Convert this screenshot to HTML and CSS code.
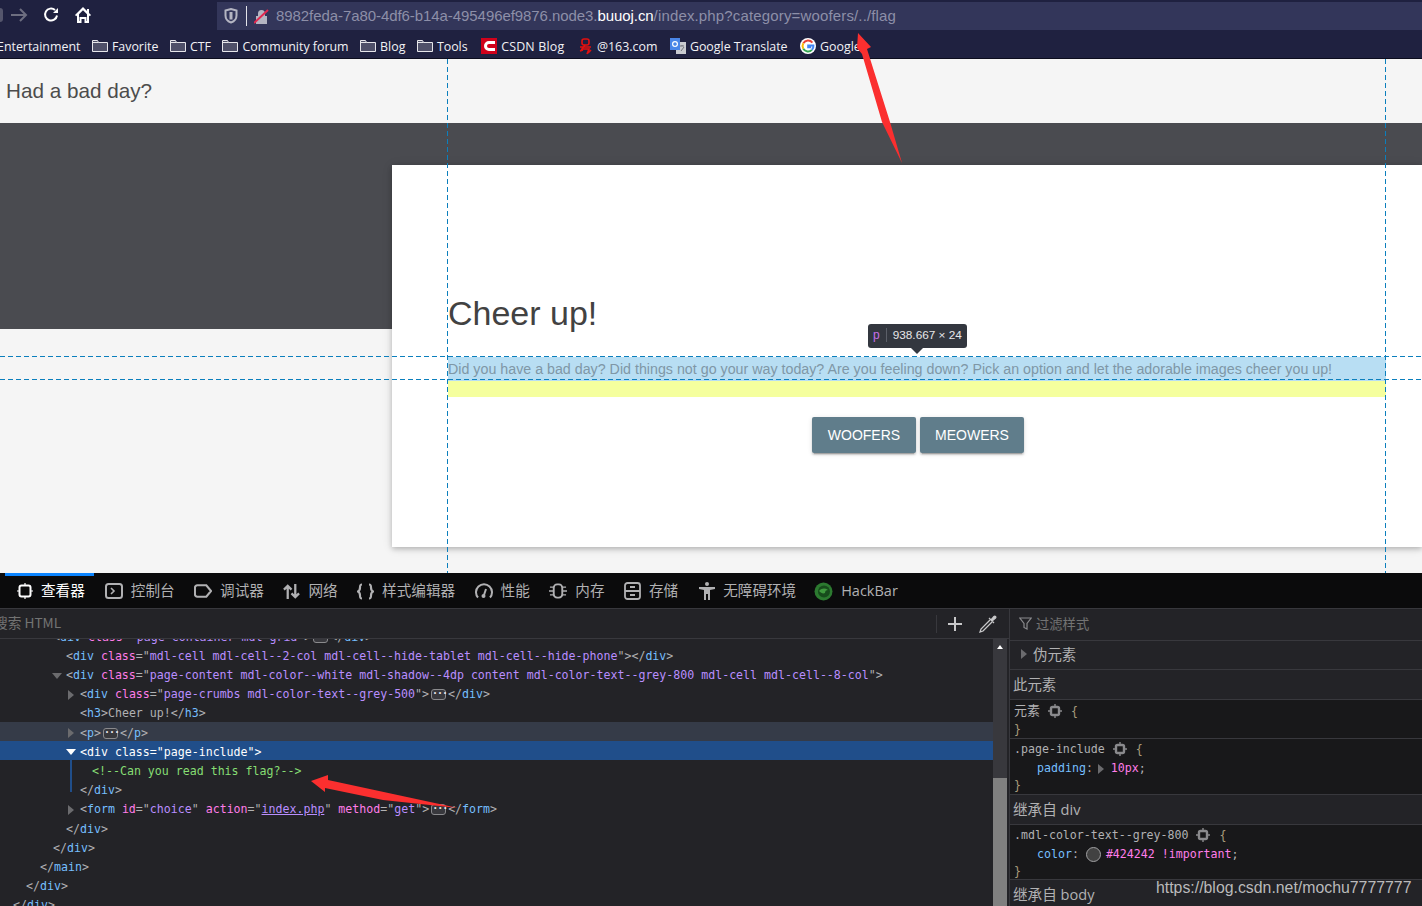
FILE: index.html
```html
<!DOCTYPE html>
<html lang="en">
<head>
    <meta charset="UTF-8">
    <title>Had a bad day?</title>
    <link rel="stylesheet" href="styles.css">
</head>
<body>
    <div class="toolbar">
        <div class="nav-buttons">
            <span class="back-stub"></span>
            <svg class="nav-icon" width="18" height="18" viewBox="0 0 18 18" fill="none" stroke="#6d6e80" stroke-width="2"><path d="M1 9h15M10 3l6 6-6 6"/></svg>
            <svg class="nav-icon" width="18" height="18" viewBox="0 0 18 18" fill="none" stroke="#fff" stroke-width="2"><path d="M15 9.500a6 6 0 1 1-2-5.500"/><path d="M16 2v5h-5z" fill="#fff" stroke="none"/></svg>
            <svg class="nav-icon" width="18" height="18" viewBox="0 0 18 18" fill="#fff"><path d="M9 1 1 9l1.200 1.200L3 9.500V17h4.500v-4h3v4H15V9.500l.8.700L17 9l-2-2V3h-2v2zM5 8.300l4-4 4 4V15h-.5v-4h-7v4H5z"/></svg>
        </div>
        <div class="urlbar">
            <svg width="14" height="16" viewBox="0 0 14 16" fill="none" stroke="#b4b5c2" stroke-width="2"><path d="M1.500 2.500 7 1l5.500 1.500v5c0 3.500-2.500 6-5.500 7-3-1-5.500-3.500-5.500-7z"/><path d="M7 4v7.500" stroke-width="3"/></svg>
            <span class="url-sep"></span>
            <svg width="15" height="17" viewBox="0 0 15 17"><path d="M4 8V5.500a3.500 3.500 0 0 1 7 0V8h2v8H2V8z" fill="#b4b5c2"/><path d="M0 15 14 2" stroke="#e22850" stroke-width="2"/></svg>
            <span class="url-text">8982feda-7a80-4df6-b14a-495496ef9876.node3.<b>buuoj.cn</b><span class="url-path">/index.php?category=woofers/../flag</span></span>
        </div>
    </div>

    <div class="bookmarks">
        <span class="bookmark first">Entertainment</span>
        <span class="bookmark"><svg class="folder" width="16" height="14" viewBox="0 0 16 14"><path d="M.5 12.500V1.500h5l1 2h9v9z" fill="#4f5069" stroke="#e6e6ea"/><path d="M.5 3.500h6" stroke="#e6e6ea"/></svg>Favorite</span>
        <span class="bookmark"><svg class="folder" width="16" height="14" viewBox="0 0 16 14"><path d="M.5 12.500V1.500h5l1 2h9v9z" fill="#4f5069" stroke="#e6e6ea"/><path d="M.5 3.500h6" stroke="#e6e6ea"/></svg>CTF</span>
        <span class="bookmark"><svg class="folder" width="16" height="14" viewBox="0 0 16 14"><path d="M.5 12.500V1.500h5l1 2h9v9z" fill="#4f5069" stroke="#e6e6ea"/><path d="M.5 3.500h6" stroke="#e6e6ea"/></svg>Community forum</span>
        <span class="bookmark"><svg class="folder" width="16" height="14" viewBox="0 0 16 14"><path d="M.5 12.500V1.500h5l1 2h9v9z" fill="#4f5069" stroke="#e6e6ea"/><path d="M.5 3.500h6" stroke="#e6e6ea"/></svg>Blog</span>
        <span class="bookmark"><svg class="folder" width="16" height="14" viewBox="0 0 16 14"><path d="M.5 12.500V1.500h5l1 2h9v9z" fill="#4f5069" stroke="#e6e6ea"/><path d="M.5 3.500h6" stroke="#e6e6ea"/></svg>Tools</span>
        <span class="bookmark csdn"><svg class="folder" width="16" height="16" viewBox="0 0 16 16"><rect width="16" height="16" fill="#d0021b"/><path d="M14 4.500H8a3.500 3.500 0 0 0 0 7h6" fill="none" stroke="#fff" stroke-width="3"/></svg>CSDN Blog</span>
        <span class="bookmark mail"><svg class="folder" width="15" height="17" viewBox="0 0 15 17" fill="none" stroke="#e3100f" stroke-width="1.600"><rect x="4" y="1" width="7" height="6" rx="2"/><path d="M2 9h11M7 7l-3 4h7l-2 5M2 13l3-1M13 12l-3 3"/></svg>@163.com</span>
        <span class="bookmark translate"><svg class="folder" width="16" height="16" viewBox="0 0 16 16"><rect x="6" y="4" width="10" height="12" fill="#c9cbd0"/><path d="M0 0h10v12H0z" fill="#4a86e8"/><circle cx="5" cy="6" r="2.400" fill="none" stroke="#fff" stroke-width="1.200"/><path d="M10 8h4M12 7v1M11 13l3-4" stroke="#70737a" fill="none"/></svg>Google Translate</span>
        <span class="bookmark google"><svg class="folder" width="16" height="16" viewBox="0 0 16 16"><circle cx="8" cy="8" r="8" fill="#fff"/><path d="M12.400 4.600A5.500 5.500 0 0 0 3.300 5.300" fill="none" stroke="#ea4335" stroke-width="2"/><path d="M3.300 5.300a5.500 5.500 0 0 0 0 5.400" fill="none" stroke="#fbbc05" stroke-width="2"/><path d="M3.300 10.700a5.500 5.500 0 0 0 8.600 1.200" fill="none" stroke="#34a853" stroke-width="2"/><path d="M11.900 11.900A5.500 5.500 0 0 0 13.400 7.500H8.200v1.800h3" fill="none" stroke="#4285f4" stroke-width="2"/></svg>Google</span>
    </div>

    <div class="page">
        <h2 class="site-title">Had a bad day?</h2>
        <div class="hero"></div>
        <div class="card">
            <h3>Cheer up!</h3>
            <p class="intro">Did you have a bad day? Did things not go your way today? Are you feeling down? Pick an option and let the adorable images cheer you up!</p>
            <div class="include-pad"></div>
            <div class="choices">
                <button>WOOFERS</button>
                <button>MEOWERS</button>
            </div>
        </div>

        <span class="guide guide-v guide-left"></span>
        <span class="guide guide-v guide-right"></span>
        <span class="guide guide-h guide-top"></span>
        <span class="guide guide-h guide-bottom"></span>
        <div class="infobar"><i>p</i><span>938.667 × 24</span></div>
    </div>

    <div class="devtools">
        <div class="tabs">
            <div class="tab active">
                <svg width="16" height="16" viewBox="0 0 16 16" fill="none" stroke="#fff" stroke-width="2"><rect x="2.500" y="2.500" width="11" height="11" rx="2"/><path d="M8 0v2M8 14v2M0 8h2M14 8h2" stroke-width="1.200"/></svg>
                查看器
            </div>
            <div class="tab">
                <svg width="18" height="16" viewBox="0 0 18 16" fill="none" stroke="#b1b1b3" stroke-width="2"><rect x="1" y="1" width="16" height="14" rx="2.500"/><path d="m6 5 3 3-3 3" stroke-width="1.600"/></svg>
                控制台
            </div>
            <div class="tab">
                <svg width="18" height="14" viewBox="0 0 19 14" fill="none" stroke="#b1b1b3" stroke-width="2.200"><path d="M3.500 1H13l5 6-5 6H3.500A2.500 2.500 0 0 1 1 10.500v-7A2.500 2.500 0 0 1 3.500 1z"/></svg>
                调试器
            </div>
            <div class="tab">
                <svg width="17" height="17" viewBox="0 0 18 16" fill="none" stroke="#b1b1b3" stroke-width="2.400"><path d="M5 16V2M1 6l4-4 4 4M13 0v14M9 10l4 4 4-4"/></svg>
                网络
            </div>
            <div class="tab">
                <svg width="17" height="17" viewBox="0 0 17 16" fill="none" stroke="#b1b1b3" stroke-width="2.200"><path d="M5 1C3 1 3 2 3 4s0 3-2 4c2 1 2 2 2 4s0 3 2 3M12 1c2 0 2 1 2 3s0 3 2 4c-2 1-2 2-2 4s0 3-2 3"/></svg>
                样式编辑器
            </div>
            <div class="tab">
                <svg width="18" height="16" viewBox="0 0 18 16" fill="none" stroke="#b1b1b3" stroke-width="2"><path d="M3 14.500a8 8 0 1 1 12 0"/><circle cx="8.500" cy="13" r="2" fill="#b1b1b3" stroke="none"/><path d="m9 12 2-6"/></svg>
                性能
            </div>
            <div class="tab">
                <svg width="18" height="16" viewBox="0 0 19 16" fill="none" stroke="#b1b1b3" stroke-width="2"><rect x="5" y="1" width="9" height="14" rx="3.500"/><path d="M5 4H1M5 8H0M5 12H1M14 4h4M14 8h5M14 12h4" stroke-width="1.400"/></svg>
                内存
            </div>
            <div class="tab">
                <svg width="17" height="18" viewBox="0 0 17 18" fill="none" stroke="#b1b1b3" stroke-width="1.800"><rect x="1" y="1" width="15" height="16" rx="2.500"/><path d="M1 9h15M6 5h5M6 13h5"/></svg>
                存储
            </div>
            <div class="tab tab-a11y">
                <svg width="16" height="18" viewBox="0 0 16 18" fill="#b1b1b3"><circle cx="8" cy="2" r="2"/><path d="M0 5h16v2l-5 1v10H9v-6H7v6H5V8L0 7z"/></svg>
                无障碍环境
            </div>
            <div class="tab">
                <svg width="19" height="19" viewBox="0 0 19 19"><circle cx="9.500" cy="9.500" r="9" fill="#2c7a30"/><circle cx="10" cy="9.500" r="6" fill="#174c1c"/><path d="M5 9c3-3 6-3 9-1-2 0-3 1-3 3-2 1-4 0-6-2z" fill="#3f9a3e"/></svg>
                <span class="tab-latin">HackBar</span>
            </div>
        </div>

        <div class="panes">
            <div class="inspector">
                <div class="searchbar">
                    <span class="search-label">搜索 HTML</span>
                    <span class="search-tools">
                        <svg width="16" height="16" viewBox="0 0 16 16" stroke="#c8c8ca" stroke-width="2"><path d="M8 1v14M1 8h14"/></svg>
                        <svg width="18" height="18" viewBox="0 0 18 18" fill="none" stroke="#c8c8ca" stroke-width="1.300"><path d="m11 5-9 9-1 3 3-1 9-9"/><path d="m10 3 5 5M12 5l3-3.500c1-1 2.500.5 1.500 1.500L13 6" fill="#c8c8ca"/></svg>
                    </span>
                </div>
                <div class="markup-wrap">
                    <div class="markup">
                        <div class="line lv4 first-line"><b>&lt;</b><em>div</em> <u>class</u><b>="</b><s>page-container mdl-grid</s><b>"&gt;</b><span class="dots">···</span><b>&lt;/</b><em>div</em><b>&gt;</b></div>
                        <div class="line lv5"><b>&lt;</b><em>div</em> <u>class</u><b>="</b><s>mdl-cell mdl-cell--2-col mdl-cell--hide-tablet mdl-cell--hide-phone</s><b>"&gt;&lt;/</b><em>div</em><b>&gt;</b></div>
                        <div class="line lv5"><i class="twisty open"></i><b>&lt;</b><em>div</em> <u>class</u><b>="</b><s>page-content mdl-color--white mdl-shadow--4dp content mdl-color-text--grey-800 mdl-cell mdl-cell--8-col</s><b>"&gt;</b></div>
                        <div class="line lv6"><i class="twisty"></i><b>&lt;</b><em>div</em> <u>class</u><b>="</b><s>page-crumbs mdl-color-text--grey-500</s><b>"&gt;</b><span class="dots">···</span><b>&lt;/</b><em>div</em><b>&gt;</b></div>
                        <div class="line lv6"><b>&lt;</b><em>h3</em><b>&gt;</b>Cheer up!<b>&lt;/</b><em>h3</em><b>&gt;</b></div>
                        <div class="line lv6 hovered"><i class="twisty"></i><b>&lt;</b><em>p</em><b>&gt;</b><span class="dots">···</span><b>&lt;/</b><em>p</em><b>&gt;</b></div>
                        <div class="line lv6 selected"><i class="twisty open"></i><b>&lt;</b>div class<b>="</b>page-include<b>"&gt;</b></div>
                        <div class="line lv7 in-selected"><span class="comment">&lt;!--Can you read this flag?--&gt;</span></div>
                        <div class="line lv6 in-selected-end"><b>&lt;/</b><em>div</em><b>&gt;</b></div>
                        <div class="line lv6"><i class="twisty"></i><b>&lt;</b><em>form</em> <u>id</u><b>="</b><s>choice</s><b>"</b> <u>action</u><b>="</b><s class="link">index.php</s><b>"</b> <u>method</u><b>="</b><s>get</s><b>"&gt;</b><span class="dots">···</span><b>&lt;/</b><em>form</em><b>&gt;</b></div>
                        <div class="line lv5"><b>&lt;/</b><em>div</em><b>&gt;</b></div>
                        <div class="line lv4"><b>&lt;/</b><em>div</em><b>&gt;</b></div>
                        <div class="line lv3"><b>&lt;/</b><em>main</em><b>&gt;</b></div>
                        <div class="line lv2"><b>&lt;/</b><em>div</em><b>&gt;</b></div>
                        <div class="line lv1"><b>&lt;/</b><em>div</em><b>&gt;</b></div>
                    </div>
                    <div class="scrollbar">
                        <span class="scroll-up"></span>
                        <span class="scroll-thumb"></span>
                    </div>
                </div>
            </div>

            <div class="rules">
                <div class="filter">
                    <svg width="13" height="13" viewBox="0 0 13 13" fill="none" stroke="#8a8a8d" stroke-width="1.200"><path d="M.8 1h11.400L8 6.500V12L5 10.500v-4z"/></svg>
                    过滤样式
                </div>
                <div class="rule-head pseudo"><i class="twisty"></i>伪元素</div>
                <div class="rule-head">此元素</div>
                <div class="rule-box box-element">
                    <div><span class="cjk">元素</span> <svg class="target" width="14" height="14" viewBox="0 0 14 14" fill="none" stroke="#8a8a8d"><rect x="3" y="3" width="8" height="8" rx="1.500" stroke-width="2.400"/><path d="M7 0v2M7 12v2M0 7h2M12 7h2" stroke-width="1.400"/></svg> <b>{</b></div>
                    <div><b>}</b></div>
                </div>
                <div class="rule-box box-include">
                    <div>.page-include <svg class="target" width="14" height="14" viewBox="0 0 14 14" fill="none" stroke="#8a8a8d"><rect x="3" y="3" width="8" height="8" rx="1.500" stroke-width="2.400"/><path d="M7 0v2M7 12v2M0 7h2M12 7h2" stroke-width="1.400"/></svg> <b>{</b></div>
                    <div class="decl"><em>padding</em>: <i class="twisty"></i><u>10px</u>;</div>
                    <div><b>}</b></div>
                </div>
                <div class="rule-head inherit">继承自 div</div>
                <div class="rule-box box-color">
                    <div>.mdl-color-text--grey-800 <svg class="target" width="14" height="14" viewBox="0 0 14 14" fill="none" stroke="#8a8a8d"><rect x="3" y="3" width="8" height="8" rx="1.500" stroke-width="2.400"/><path d="M7 0v2M7 12v2M0 7h2M12 7h2" stroke-width="1.400"/></svg> <b>{</b></div>
                    <div class="decl"><em>color</em>: <span class="swatch"></span><u>#424242 !important</u>;</div>
                    <div><b>}</b></div>
                </div>
                <div class="rule-head inherit">继承自 body</div>
            </div>
        </div>
    </div>

    <svg class="annotations" width="1422" height="906" viewBox="0 0 1422 906" fill="#fb2f2f">
        <path d="M858 33 871 47 867 49 890 122 902 163 882 122 862 54 857 48z"/>
        <path d="M311 781 328 775 328 780 458 808 383 800 325 788 325 792z"/>
    </svg>
    <div class="watermark">https://blog.csdn.net/mochu7777777</div>
</body>
</html>
```

FILE: styles.css
```css
html, body {
    margin: 0;
    padding: 0;
}
body {
    width: 1422px;
    height: 906px;
    overflow: hidden;
    position: relative;
    display: flex;
    flex-direction: column;
    font-family: "Liberation Sans", Arial, sans-serif;
    background: #f5f5f5;
}

/* browser chrome */
.toolbar {
    height: 30px;
    display: flex;
    align-items: flex-end;
    background: #1f2140;
}
.nav-buttons {
    width: 217px;
    height: 30px;
    display: flex;
    align-items: center;
    gap: 14px;
    padding-left: 10px;
    box-sizing: border-box;
}
.back-stub {
    width: 3px;
    height: 14px;
    margin-left: -10px;
    margin-right: -7px;
    background: #55566c;
    border-radius: 0 7px 7px 0;
}
.urlbar {
    flex: 1;
    height: 28px;
    display: flex;
    align-items: center;
    background: #33365a;
    padding-left: 7px;
}
.url-sep {
    width: 1px;
    height: 20px;
    margin: 0 7px 0 8px;
    background: #e3e3ea;
}
.url-text {
    margin: 0 0 2px 7px;
    font-size: 15px;
    letter-spacing: -0.070px;
    color: #8d8fa8;
    white-space: nowrap;
}
.url-text b {
    font-weight: normal;
    color: #fff;
}
.url-path {
    letter-spacing: 0.150px;
}
.bookmarks {
    height: 29px;
    box-sizing: border-box;
    display: flex;
    align-items: center;
    gap: 11.500px;
    background: #1f2140;
    border-bottom: 1px solid #0c0d1e;
    padding-top: 4px;
    color: #f2f2f5;
    font-family: "Open Sans", sans-serif;
    font-size: 12.400px;
    white-space: nowrap;
}
.bookmark {
    display: flex;
    align-items: center;
    gap: 4px;
}
.bookmark.first {
    margin-left: -3px;
}
.bookmark.csdn {
    margin-left: 2px;
    letter-spacing: 0.200px;
}
.bookmark.mail {
    margin-left: 2px;
}
.bookmark.translate {
    margin-left: 1px;
}
.bookmark.google {
    margin-left: 1px;
}

/* the page itself */
.page {
    height: 514px;
    position: relative;
    overflow: hidden;
    background: #f5f5f5;
}
.site-title {
    height: 64px;
    margin: 0;
    padding-left: 6px;
    font-size: 20.700px;
    font-weight: normal;
    line-height: 63.500px;
    color: #4c4c4c;
}
.hero {
    height: 206px;
    background: #4a4b50;
}
.card {
    height: 382px;
    margin: -164px 0 0 392px;
    padding: 0 36px 0 56px;
    background: #fff;
    box-shadow: 0 2px 5px rgba(0,0,0,0.2), 0 1px 10px rgba(0,0,0,0.12);
}
.card h3 {
    margin: 0;
    padding-top: 128px;
    font-size: 34px;
    line-height: 40px;
    font-weight: normal;
    color: #424242;
}
.intro {
    margin: 24px 0 0;
    height: 24px;
    line-height: 24px;
    font-size: 14.260px;
    color: #7f97a6;
    background: #b8def3;
    white-space: nowrap;
}
.include-pad {
    height: 16px;
    background: #f5ff9e;
}
.choices {
    display: flex;
    justify-content: center;
    gap: 4px;
    margin-top: 20px;
    padding-left: 2px;
}
.choices button {
    width: 104px;
    height: 36px;
    border: 0;
    border-radius: 2px;
    background: #607d8b;
    color: #fff;
    font-family: "Liberation Sans", Arial, sans-serif;
    font-size: 14px;
    box-shadow: 0 2px 2px rgba(0,0,0,0.14), 0 3px 1px -2px rgba(0,0,0,0.2), 0 1px 5px rgba(0,0,0,0.12);
}

/* highlighter overlay */
.guide {
    position: absolute;
}
.guide-v {
    top: 0;
    bottom: 0;
    width: 1px;
    background: repeating-linear-gradient(to bottom, #0b7fbd 0 5px, transparent 5px 8px);
}
.guide-left {
    left: 447px;
}
.guide-right {
    left: 1385px;
}
.guide-h {
    left: 0;
    right: 0;
    height: 1px;
    background: repeating-linear-gradient(to right, #0b7fbd 0 5px, transparent 5px 8px);
}
.guide-top {
    top: 297px;
}
.guide-bottom {
    top: 320px;
}
.infobar {
    position: absolute;
    left: 868px;
    top: 265px;
    width: 99px;
    height: 24px;
    box-sizing: border-box;
    display: flex;
    align-items: center;
    padding: 0 0 2px 5px;
    background: #33373f;
    border-radius: 3px;
    font-size: 11.800px;
    color: #e6e6e8;
}
.infobar::after {
    content: "";
    position: absolute;
    left: 43px;
    top: 24px;
    border: 6px solid transparent;
    border-bottom: 0;
    border-top-color: #33373f;
}
.infobar i {
    font-style: normal;
    color: #c86fe8;
    font-size: 12px;
    padding-right: 6px;
    margin-right: 6px;
    line-height: 14px;
    border-right: 1px solid #5b5f68;
}

/* devtools */
.devtools {
    flex: 1;
    min-height: 0;
    display: flex;
    flex-direction: column;
    background: #232327;
    color: #b1b1b3;
}
.tabs {
    height: 36px;
    box-sizing: border-box;
    display: flex;
    padding-left: 5px;
    background: #0b0b0c;
    border-bottom: 1px solid #38383d;
    font-family: "Noto Sans CJK SC", sans-serif;
    font-size: 14.600px;
    white-space: nowrap;
}
.tab {
    display: flex;
    align-items: center;
    gap: 8px;
    padding: 2px 8.500px 4px 11px;
    color: #b1b1b3;
}
.tab svg {
    margin-top: 3px;
}
.tab.active {
    color: #fff;
    border-top: 3px solid #0a84ff;
    padding: 0 9px 5px 12px;
}
.tab.tab-a11y {
    padding-left: 12.500px;
    padding-right: 7px;
}
.tab-latin {
    font-family: "Open Sans", sans-serif;
    font-size: 14.500px;
    margin-top: 2px;
}
.panes {
    flex: 1;
    min-height: 0;
    display: flex;
}
.inspector {
    width: 1009px;
    border-right: 1px solid #38383d;
    display: flex;
    flex-direction: column;
}
.searchbar {
    height: 30px;
    box-sizing: border-box;
    display: flex;
    align-items: center;
    justify-content: space-between;
    border-bottom: 1px solid #38383d;
    overflow: hidden;
    font-family: "Noto Sans CJK SC", sans-serif;
    font-size: 13.700px;
    color: #737373;
}
.search-label {
    margin: -3px 0 0 -6px;
}
.search-tools {
    display: flex;
    align-items: center;
    gap: 16px;
    height: 18px;
    padding: 0 12px 0 10px;
    border-left: 1px solid #38383d;
}
.markup-wrap {
    flex: 1;
    min-height: 0;
    display: flex;
}
.markup {
    flex: 1;
    overflow: hidden;
    background: #232327;
    font-family: "DejaVu Sans Mono", monospace;
    font-size: 11.600px;
    color: #b1b1b3;
    white-space: nowrap;
}
.line {
    height: 19.200px;
    line-height: 22.200px;
    position: relative;
}
.first-line {
    margin-top: -13.300px;
}
.lv1 { padding-left: 13px; }
.lv2 { padding-left: 26px; }
.lv3 { padding-left: 40px; }
.lv4 { padding-left: 53px; }
.lv5 { padding-left: 66px; }
.lv6 { padding-left: 80px; }
.lv7 { padding-left: 92px; }
.line b {
    font-weight: normal;
}
.line em {
    font-style: normal;
    color: #75bfff;
}
.line u {
    text-decoration: none;
    color: #ff7de9;
}
.line s {
    text-decoration: none;
    color: #b98eff;
}
.line s.link {
    text-decoration: underline;
}
.comment {
    color: #86de74;
}
.hovered {
    background: #353b48;
}
.selected {
    background: #204e8a;
    color: #fff;
}
.in-selected::before,
.in-selected-end::before {
    content: "";
    position: absolute;
    left: 70px;
    top: 0;
    bottom: 0;
    width: 2px;
    background: #204e8a;
}
.in-selected-end::before {
    bottom: 6px;
}
.twisty {
    display: inline-block;
    width: 14px;
    margin-left: -14px;
    height: 0;
    vertical-align: middle;
    position: relative;
}
.twisty::before {
    content: "";
    position: absolute;
    left: 2px;
    top: -5px;
    border-left: 6px solid #6b6b6e;
    border-top: 5px solid transparent;
    border-bottom: 5px solid transparent;
}
.twisty.open::before {
    left: 0;
    top: -3px;
    border-left: 5px solid transparent;
    border-right: 5px solid transparent;
    border-top: 6px solid #6b6b6e;
    border-bottom: 0;
}
.selected .twisty::before {
    border-top-color: #fff;
}
.dots {
    display: inline-block;
    box-sizing: border-box;
    width: 15px;
    height: 11px;
    margin: 0 2px;
    border: 1px solid #8a8a8d;
    border-radius: 3px;
    background: #38383d;
    color: #e6e6e8;
    font-size: 10px;
    font-weight: bold;
    line-height: 8px;
    letter-spacing: -1px;
    text-align: center;
    vertical-align: middle;
}
.scrollbar {
    width: 14px;
    margin-right: 2px;
    display: flex;
    flex-direction: column;
    justify-content: space-between;
    background: #38383d;
    align-items: center;
}
.scroll-up {
    margin-top: 6px;
    border-left: 3.500px solid transparent;
    border-right: 3.500px solid transparent;
    border-bottom: 4px solid #fff;
}
.scroll-thumb {
    width: 14px;
    height: 128px;
    background: #808080;
}

/* rules sidebar */
.rules {
    flex: 1;
    font-family: "DejaVu Sans Mono", "Noto Sans CJK SC", monospace;
    font-size: 11.600px;
    color: #b1b1b3;
}
.filter {
    height: 32px;
    box-sizing: border-box;
    display: flex;
    align-items: center;
    gap: 4px;
    padding: 0 0 2px 9px;
    border-bottom: 1px solid #38383d;
    font-family: "Noto Sans CJK SC", sans-serif;
    font-size: 13.300px;
    color: #737373;
}
.rule-head {
    height: 30px;
    box-sizing: border-box;
    display: flex;
    align-items: center;
    padding: 0 0 2px 3px;
    border-bottom: 1px solid #38383d;
    background: #232327;
    font-family: "Noto Sans CJK SC", sans-serif;
    font-size: 14.400px;
}
.rule-head.pseudo {
    height: 29px;
    padding: 0 0 3px 23px;
}
.rule-head.inherit {
    font-family: "Open Sans", "Noto Sans CJK SC", sans-serif;
    font-size: 14.600px;
}
.rule-box {
    box-sizing: border-box;
    padding-left: 4px;
    border-bottom: 1px solid #38383d;
    background: #18181a;
    line-height: 19.200px;
    white-space: nowrap;
}
.rule-box > div:last-child {
    height: 14px;
    line-height: 14px;
}
.box-element { height: 39px; padding-top: 1px; }
.box-include { height: 56px; padding-top: 1px; }
.box-color { height: 55px; padding-top: 1px; }
.box-element > div:last-child { line-height: 16px; }
.cjk {
    font-size: 13px;
}
.rule-box b {
    font-weight: normal;
    color: #a89c7c;
}
.decl {
    padding-left: 23px;
}
.decl em {
    font-style: normal;
    color: #75bfff;
}
.decl u {
    text-decoration: none;
    color: #ff7de9;
}
.decl .twisty {
    margin-left: 0;
    width: 11px;
}
.decl .twisty::before {
    left: -2px;
}
.target {
    margin: 0 2px 0 1px;
    vertical-align: -3px;
}
.swatch {
    display: inline-block;
    box-sizing: border-box;
    width: 15px;
    height: 15px;
    margin-right: 5px;
    border: 1px solid #a0a0a2;
    border-radius: 50%;
    background: #424242;
    vertical-align: middle;
}

/* screenshot markup on top of everything */
.annotations {
    position: absolute;
    left: 0;
    top: 0;
    pointer-events: none;
}
.watermark {
    position: absolute;
    left: 1156px;
    top: 879px;
    font-size: 15.850px;
    color: rgba(215,215,215,0.85);
    white-space: nowrap;
}
```
